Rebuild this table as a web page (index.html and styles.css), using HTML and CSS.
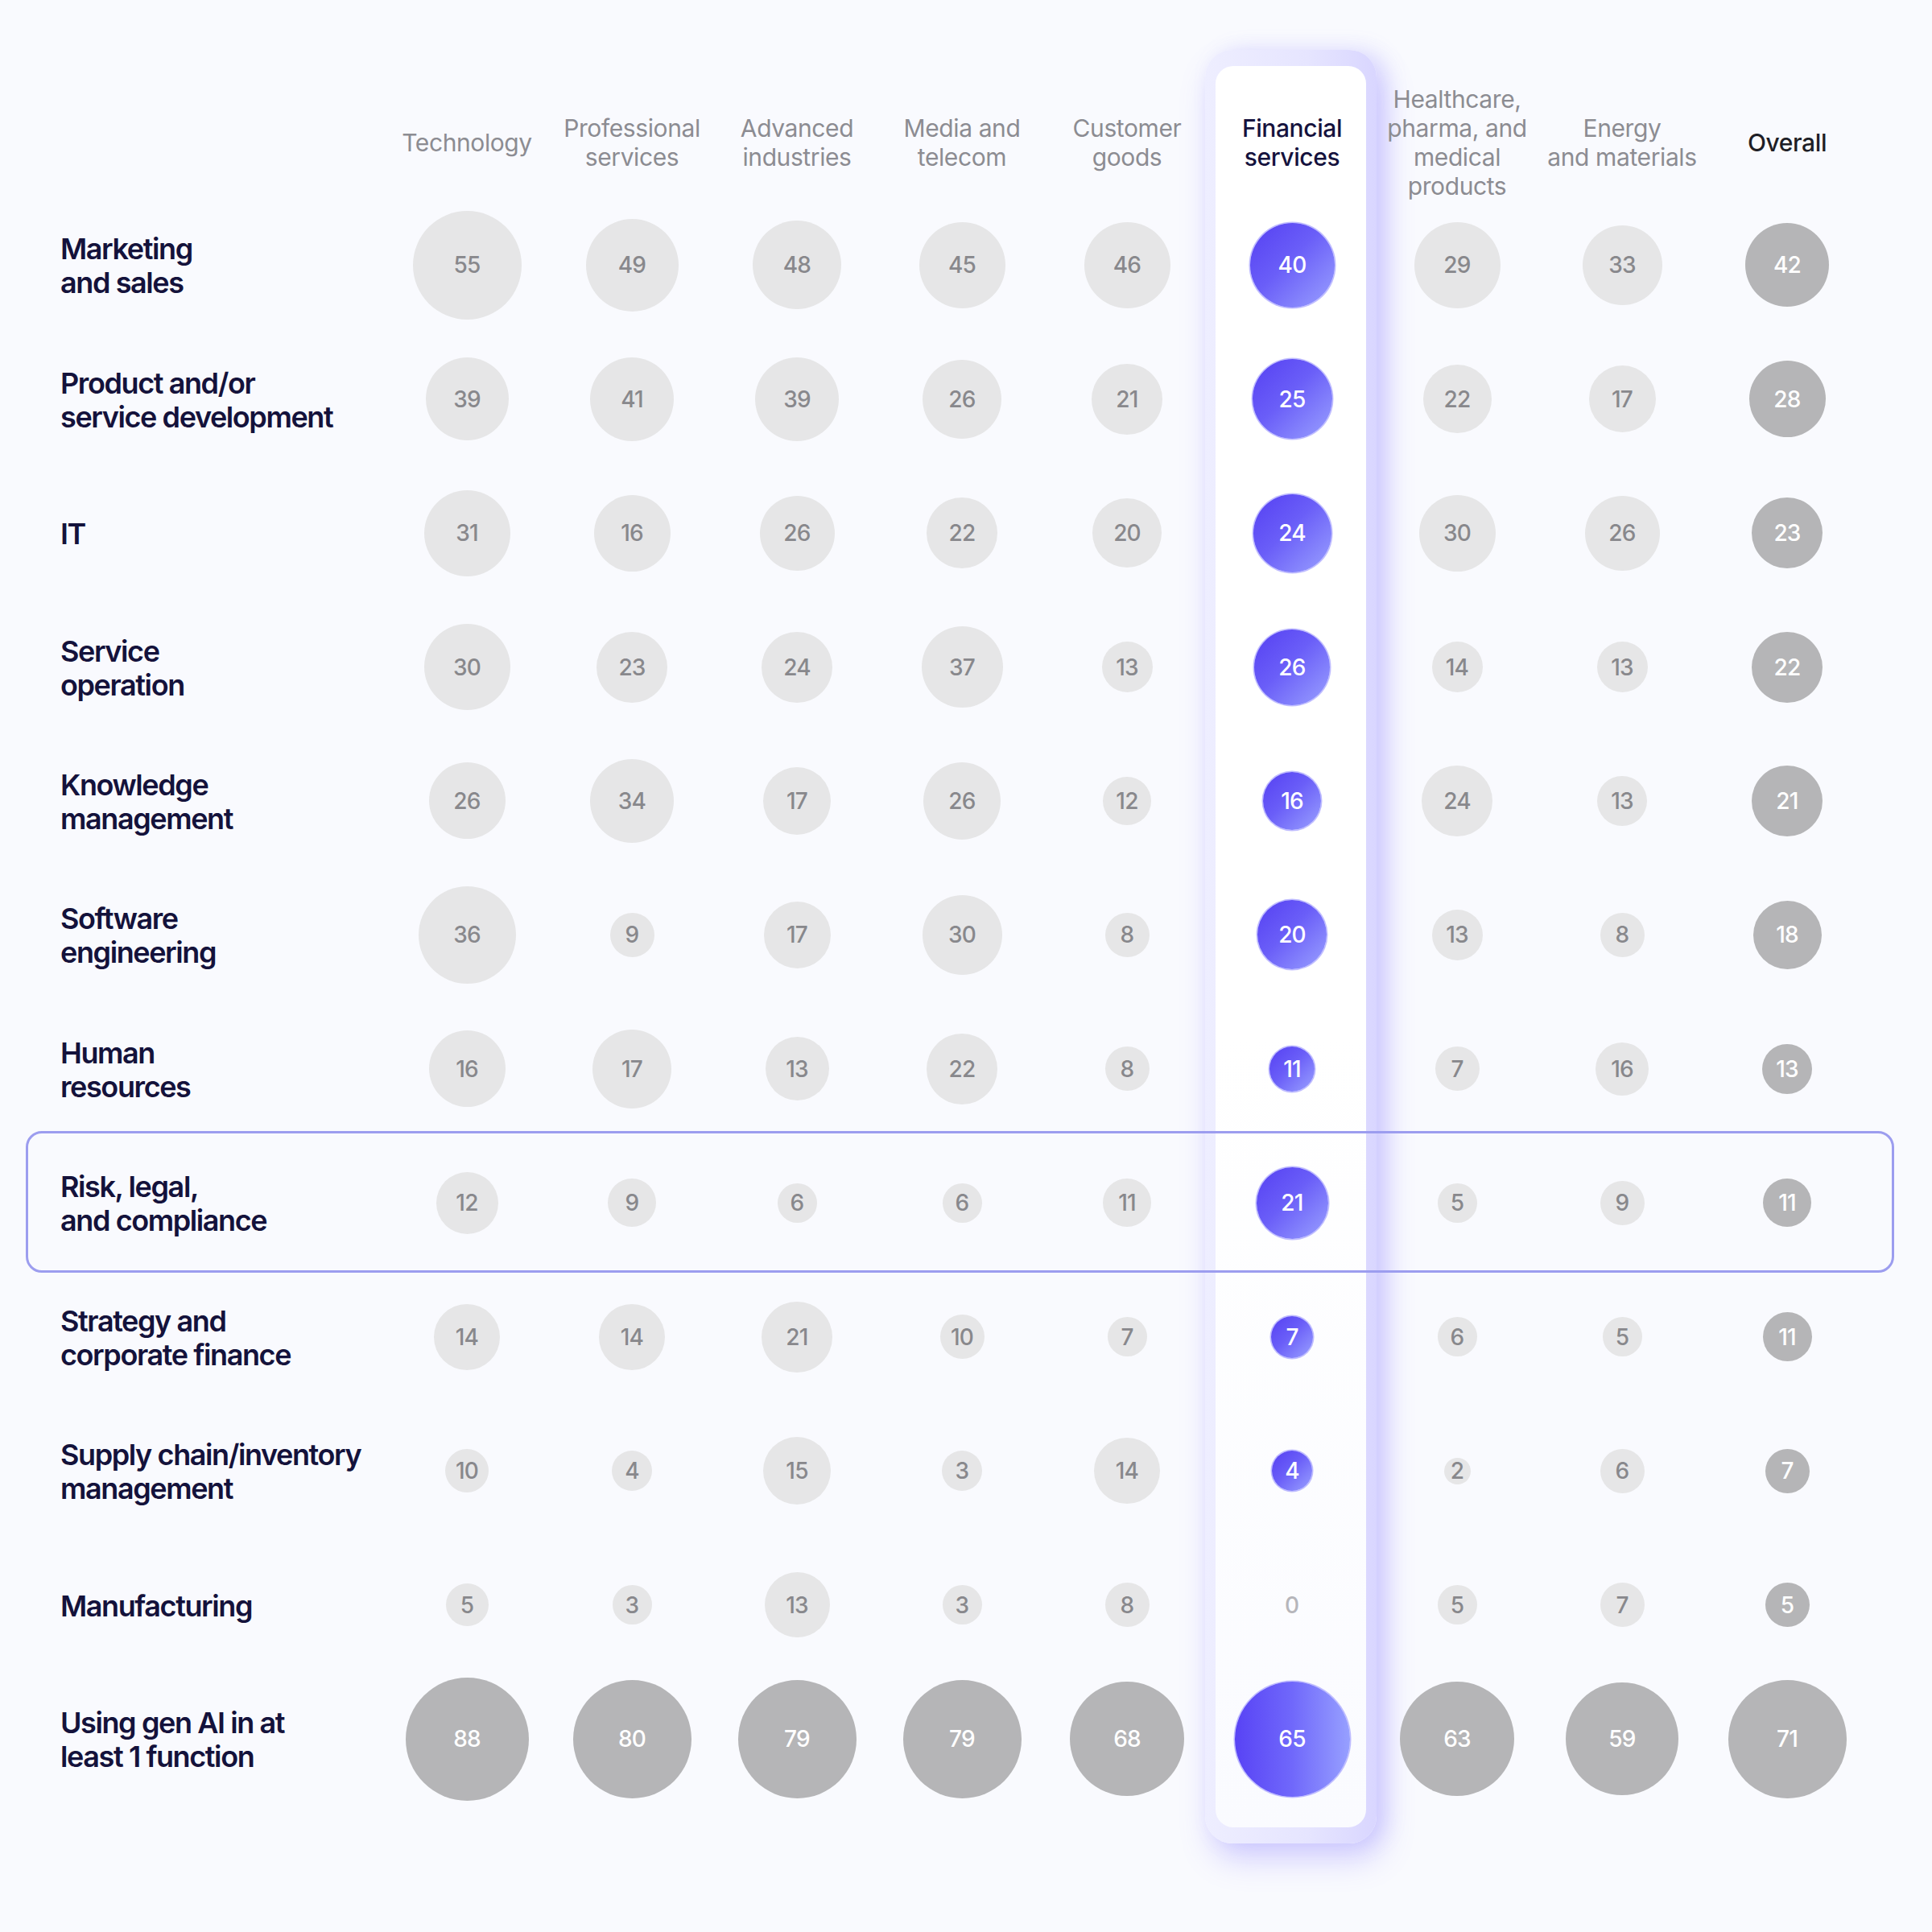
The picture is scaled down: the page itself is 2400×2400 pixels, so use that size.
FILE: index.html
```html
<!DOCTYPE html>
<html lang="en">
<head>
<meta charset="utf-8">
<title>Gen AI use by industry and function</title>
<link rel="stylesheet" href="styles.css">
</head>
<body>
<main class="chart">
  <div class="layer layer-bg">
    <div class="col-hl"><div class="col-hl-inner"></div></div>
  </div>

  <div class="layer table">
    <div class="corner"></div>
    <div class="head">Technology</div>
    <div class="head">Professional<br>services</div>
    <div class="head">Advanced<br>industries</div>
    <div class="head">Media and<br>telecom</div>
    <div class="head">Customer<br>goods</div>
    <div class="head head-fin">Financial<br>services</div>
    <div class="head">Healthcare,<br>pharma, and<br>medical<br>products</div>
    <div class="head">Energy<br>and materials</div>
    <div class="head head-all">Overall</div>

    <div class="label">Marketing<br>and sales</div>
    <div class="cell"><span class="dot l" style="--d:135px">55</span></div>
    <div class="cell"><span class="dot l" style="--d:115px">49</span></div>
    <div class="cell"><span class="dot l" style="--d:110px">48</span></div>
    <div class="cell"><span class="dot l" style="--d:107px">45</span></div>
    <div class="cell"><span class="dot l" style="--d:107px">46</span></div>
    <div class="cell"><span class="dot p" style="--d:105px">40</span></div>
    <div class="cell"><span class="dot l" style="--d:107px">29</span></div>
    <div class="cell"><span class="dot l" style="--d:99px">33</span></div>
    <div class="cell"><span class="dot g" style="--d:104px">42</span></div>

    <div class="label">Product and/or<br>service development</div>
    <div class="cell"><span class="dot l" style="--d:103px">39</span></div>
    <div class="cell"><span class="dot l" style="--d:104px">41</span></div>
    <div class="cell"><span class="dot l" style="--d:104px">39</span></div>
    <div class="cell"><span class="dot l" style="--d:98px">26</span></div>
    <div class="cell"><span class="dot l" style="--d:88px">21</span></div>
    <div class="cell"><span class="dot p" style="--d:99px">25</span></div>
    <div class="cell"><span class="dot l" style="--d:85px">22</span></div>
    <div class="cell"><span class="dot l" style="--d:83px">17</span></div>
    <div class="cell"><span class="dot g" style="--d:95px">28</span></div>

    <div class="label">IT</div>
    <div class="cell"><span class="dot l" style="--d:107px">31</span></div>
    <div class="cell"><span class="dot l" style="--d:95px">16</span></div>
    <div class="cell"><span class="dot l" style="--d:93px">26</span></div>
    <div class="cell"><span class="dot l" style="--d:88px">22</span></div>
    <div class="cell"><span class="dot l" style="--d:86px">20</span></div>
    <div class="cell"><span class="dot p" style="--d:97px">24</span></div>
    <div class="cell"><span class="dot l" style="--d:95px">30</span></div>
    <div class="cell"><span class="dot l" style="--d:93px">26</span></div>
    <div class="cell"><span class="dot g" style="--d:88px">23</span></div>

    <div class="label">Service<br>operation</div>
    <div class="cell"><span class="dot l" style="--d:107px">30</span></div>
    <div class="cell"><span class="dot l" style="--d:88px">23</span></div>
    <div class="cell"><span class="dot l" style="--d:88px">24</span></div>
    <div class="cell"><span class="dot l" style="--d:101px">37</span></div>
    <div class="cell"><span class="dot l" style="--d:63px">13</span></div>
    <div class="cell"><span class="dot p" style="--d:94px">26</span></div>
    <div class="cell"><span class="dot l" style="--d:63px">14</span></div>
    <div class="cell"><span class="dot l" style="--d:63px">13</span></div>
    <div class="cell"><span class="dot g" style="--d:88px">22</span></div>

    <div class="label">Knowledge<br>management</div>
    <div class="cell"><span class="dot l" style="--d:95px">26</span></div>
    <div class="cell"><span class="dot l" style="--d:104px">34</span></div>
    <div class="cell"><span class="dot l" style="--d:84px">17</span></div>
    <div class="cell"><span class="dot l" style="--d:96px">26</span></div>
    <div class="cell"><span class="dot l" style="--d:60px">12</span></div>
    <div class="cell"><span class="dot p" style="--d:72px">16</span></div>
    <div class="cell"><span class="dot l" style="--d:88px">24</span></div>
    <div class="cell"><span class="dot l" style="--d:62px">13</span></div>
    <div class="cell"><span class="dot g" style="--d:88px">21</span></div>

    <div class="label">Software<br>engineering</div>
    <div class="cell"><span class="dot l" style="--d:121px">36</span></div>
    <div class="cell"><span class="dot l" style="--d:55px">9</span></div>
    <div class="cell"><span class="dot l" style="--d:83px">17</span></div>
    <div class="cell"><span class="dot l" style="--d:99px">30</span></div>
    <div class="cell"><span class="dot l" style="--d:55px">8</span></div>
    <div class="cell"><span class="dot p" style="--d:86px">20</span></div>
    <div class="cell"><span class="dot l" style="--d:63px">13</span></div>
    <div class="cell"><span class="dot l" style="--d:55px">8</span></div>
    <div class="cell"><span class="dot g" style="--d:85px">18</span></div>

    <div class="label">Human<br>resources</div>
    <div class="cell"><span class="dot l" style="--d:95px">16</span></div>
    <div class="cell"><span class="dot l" style="--d:98px">17</span></div>
    <div class="cell"><span class="dot l" style="--d:79px">13</span></div>
    <div class="cell"><span class="dot l" style="--d:88px">22</span></div>
    <div class="cell"><span class="dot l" style="--d:55px">8</span></div>
    <div class="cell"><span class="dot p" style="--d:56px">11</span></div>
    <div class="cell"><span class="dot l" style="--d:55px">7</span></div>
    <div class="cell"><span class="dot l" style="--d:66px">16</span></div>
    <div class="cell"><span class="dot g" style="--d:62px">13</span></div>

    <div class="label">Risk, legal,<br>and compliance</div>
    <div class="cell"><span class="dot l" style="--d:77px">12</span></div>
    <div class="cell"><span class="dot l" style="--d:60px">9</span></div>
    <div class="cell"><span class="dot l" style="--d:49px">6</span></div>
    <div class="cell"><span class="dot l" style="--d:49px">6</span></div>
    <div class="cell"><span class="dot l" style="--d:60px">11</span></div>
    <div class="cell"><span class="dot p" style="--d:89px">21</span></div>
    <div class="cell"><span class="dot l" style="--d:49px">5</span></div>
    <div class="cell"><span class="dot l" style="--d:55px">9</span></div>
    <div class="cell"><span class="dot g" style="--d:60px">11</span></div>

    <div class="label">Strategy and<br>corporate finance</div>
    <div class="cell"><span class="dot l" style="--d:82px">14</span></div>
    <div class="cell"><span class="dot l" style="--d:82px">14</span></div>
    <div class="cell"><span class="dot l" style="--d:88px">21</span></div>
    <div class="cell"><span class="dot l" style="--d:55px">10</span></div>
    <div class="cell"><span class="dot l" style="--d:49px">7</span></div>
    <div class="cell"><span class="dot p" style="--d:52px">7</span></div>
    <div class="cell"><span class="dot l" style="--d:49px">6</span></div>
    <div class="cell"><span class="dot l" style="--d:49px">5</span></div>
    <div class="cell"><span class="dot g" style="--d:61px">11</span></div>

    <div class="label">Supply chain/inventory<br>management</div>
    <div class="cell"><span class="dot l" style="--d:54px">10</span></div>
    <div class="cell"><span class="dot l" style="--d:50px">4</span></div>
    <div class="cell"><span class="dot l" style="--d:84px">15</span></div>
    <div class="cell"><span class="dot l" style="--d:50px">3</span></div>
    <div class="cell"><span class="dot l" style="--d:82px">14</span></div>
    <div class="cell"><span class="dot p" style="--d:50px">4</span></div>
    <div class="cell"><span class="dot l" style="--d:33px">2</span></div>
    <div class="cell"><span class="dot l" style="--d:55px">6</span></div>
    <div class="cell"><span class="dot g" style="--d:55px">7</span></div>

    <div class="label">Manufacturing</div>
    <div class="cell"><span class="dot l" style="--d:53px">5</span></div>
    <div class="cell"><span class="dot l" style="--d:49px">3</span></div>
    <div class="cell"><span class="dot l" style="--d:81px">13</span></div>
    <div class="cell"><span class="dot l" style="--d:49px">3</span></div>
    <div class="cell"><span class="dot l" style="--d:55px">8</span></div>
    <div class="cell"><span class="zero">0</span></div>
    <div class="cell"><span class="dot l" style="--d:49px">5</span></div>
    <div class="cell"><span class="dot l" style="--d:55px">7</span></div>
    <div class="cell"><span class="dot g" style="--d:55px">5</span></div>

    <div class="label">Using gen AI in at<br>least 1 function</div>
    <div class="cell"><span class="dot g" style="--d:153px">88</span></div>
    <div class="cell"><span class="dot g" style="--d:147px">80</span></div>
    <div class="cell"><span class="dot g" style="--d:147px">79</span></div>
    <div class="cell"><span class="dot g" style="--d:147px">79</span></div>
    <div class="cell"><span class="dot g" style="--d:142px">68</span></div>
    <div class="cell"><span class="dot p p-h" style="--d:143px">65</span></div>
    <div class="cell"><span class="dot g" style="--d:142px">63</span></div>
    <div class="cell"><span class="dot g" style="--d:140px">59</span></div>
    <div class="cell"><span class="dot g" style="--d:147px">71</span></div>
  </div>

  <div class="layer layer-fg">
    <div class="row-hl"></div>
  </div>
</main>
</body>
</html>
```

FILE: styles.css
```css
html, body {
  margin: 0;
  padding: 0;
}

body {
  width: 2400px;
  height: 2400px;
  background: #f9fafe;
  font-family: Inter, "Noto Sans", "Liberation Sans", sans-serif;
  overflow: hidden;
}

.chart {
  display: grid;
  padding: 62px 0 0 32px;
}

.layer {
  grid-area: 1 / 1;
  display: grid;
  grid-template-columns: 445.5px repeat(9, 205px);
  grid-template-rows: 184px repeat(12, 166.45px);
}

/* highlighted column (Financial services) */
.layer-bg {
  z-index: 0;
}

.col-hl {
  grid-column: 7;
  grid-row: 1 / -1;
  margin: 0 -2.5px -47px -5.5px;
  padding: 20px 13px;
  border-radius: 34px;
  background: linear-gradient(90deg, #eeeeff 0%, #e6e5ff 60%, #d9d6ff 100%);
  box-shadow: 8px 20px 38px rgba(128, 116, 255, 0.30), 12px 0 26px rgba(150, 140, 255, 0.22);
  display: flex;
}

.col-hl-inner {
  flex: 1;
  border-radius: 22px;
  background: linear-gradient(180deg, #ffffff 0%, #ffffff 55%, #fafbff 100%);
}

.table {
  z-index: 1;
}

.layer-fg {
  z-index: 2;
  pointer-events: none;
}

.row-hl {
  grid-column: 1 / -1;
  grid-row: 9;
  margin: -6px -30.5px -3.5px 0;
  border: 3px solid #9c9def;
  border-radius: 20px;
}

/* header */
.head {
  display: flex;
  align-items: center;
  justify-content: center;
  padding-top: 46px;
  text-align: center;
  font-size: 30px;
  line-height: 36px;
  font-weight: 400;
  letter-spacing: -0.4px;
  color: #8c8c92;
}

.head-fin {
  color: #15123d;
  font-weight: 500;
}

.head-all {
  color: #1e1e26;
  font-weight: 500;
}

/* row labels */
.label {
  display: flex;
  align-items: center;
  padding-left: 43px;
  padding-top: 2px;
  font-size: 36px;
  line-height: 42px;
  font-weight: 600;
  letter-spacing: -1.4px;
  color: #14123b;
}

/* data cells */
.cell {
  display: flex;
  align-items: center;
  justify-content: center;
}

.dot {
  width: var(--d);
  height: var(--d);
  flex: none;
  border-radius: 50%;
  display: flex;
  align-items: center;
  justify-content: center;
  font-size: 28px;
  font-weight: 500;
  letter-spacing: -0.8px;
}

.dot.l {
  background: #e6e6e7;
  color: #88888c;
}

.dot.g {
  background: #b5b5b7;
  color: #ffffff;
}

.dot.p {
  background: linear-gradient(135deg, #5540f2 0%, #6a5ef8 45%, #9aa1ff 100%);
  color: #ffffff;
  box-shadow: 0 0 0 1.5px rgba(170, 165, 255, 0.75);
}

.dot.p.p-h {
  background: linear-gradient(90deg, #5843f5 0%, #7068fb 50%, #97a0ff 100%);
}

.zero {
  font-size: 28px;
  font-weight: 500;
  color: #b6b6bb;
}
```
